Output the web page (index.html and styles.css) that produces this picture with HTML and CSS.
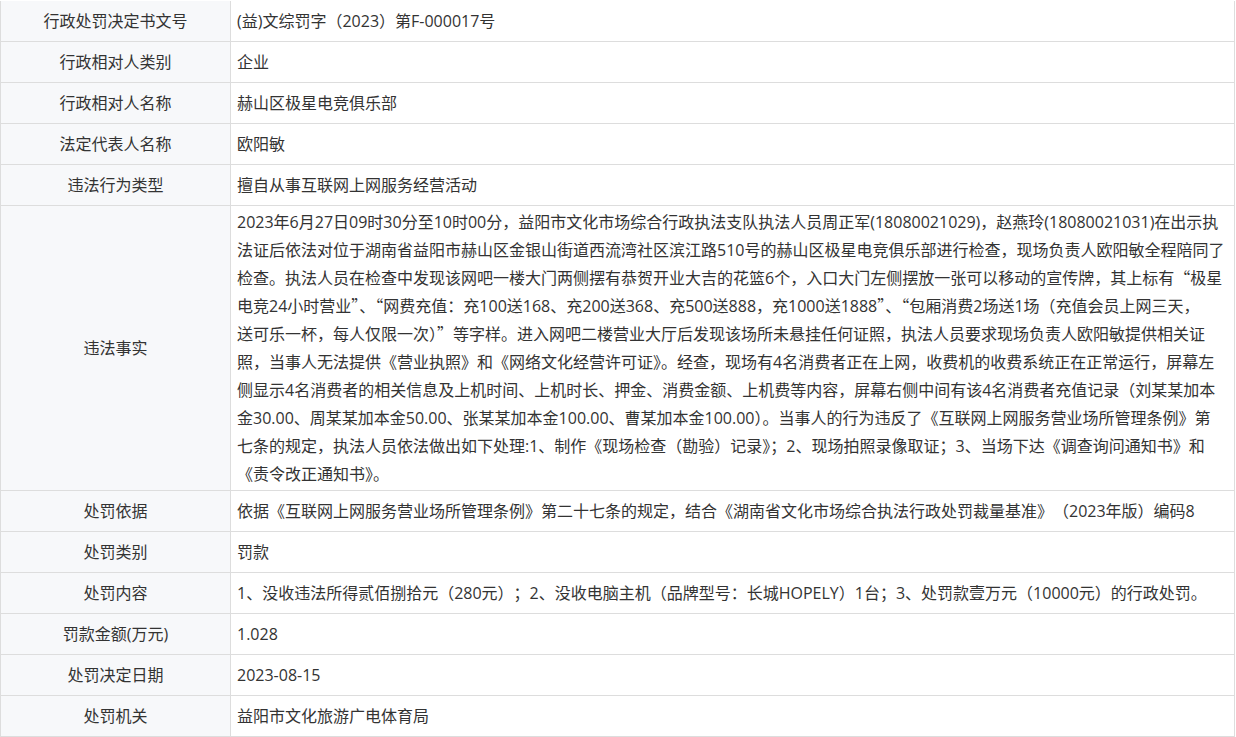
FILE: index.html
```html
<!DOCTYPE html>
<html lang="zh-CN">
<head>
<meta charset="utf-8">
<title>行政处罚信息</title>
<link rel="stylesheet" href="styles.css">
</head>
<body>
<div class="sheet">
  <div class="label">行政处罚决定书文号</div>
  <div class="value">(益)文综罚字（2023）第F-000017号</div>

  <div class="label">行政相对人类别</div>
  <div class="value">企业</div>

  <div class="label">行政相对人名称</div>
  <div class="value">赫山区极星电竞俱乐部</div>

  <div class="label">法定代表人名称</div>
  <div class="value">欧阳敏</div>

  <div class="label">违法行为类型</div>
  <div class="value">擅自从事互联网上网服务经营活动</div>

  <div class="label">违法事实</div>
  <div class="value value-long"><p class="para">2023年6月27日09时30分至10时00分，益阳市文化市场综合行政执法支队执法人员周正军(18080021029)，赵燕玲(18080021031)在出示执<br>法证后依法对位于湖南省益阳市赫山区金银山街道西流湾社区滨江路510号的赫山区极星电竞俱乐部进行检查，现场负责人欧阳敏全程陪同了<br>检查。执法人员在检查中发现该网吧一楼大门两侧摆有恭贺开业大吉的花篮6个，入口大门左侧摆放一张可以移动的宣传牌，其上标有<span class="q">“</span>极星<br>电竞24小时营业<span class="q">”</span>、<span class="q">“</span>网费充值：充100送168、充200送368、充500送888，充1000送1888<span class="q">”</span>、<span class="q">“</span>包厢消费2场送1场（充值会员上网三天，<br>送可乐一杯，每人仅限一次）<span class="q">”</span>等字样。进入网吧二楼营业大厅后发现该场所未悬挂任何证照，执法人员要求现场负责人欧阳敏提供相关证<br>照，当事人无法提供《营业执照》和《网络文化经营许可证》。经查，现场有4名消费者正在上网，收费机的收费系统正在正常运行，屏幕左<br>侧显示4名消费者的相关信息及上机时间、上机时长、押金、消费金额、上机费等内容，屏幕右侧中间有该4名消费者充值记录（刘某某加本<br>金30.00、周某某加本金50.00、张某某加本金100.00、曹某加本金100.00）。当事人的行为违反了《互联网上网服务营业场所管理条例》第<br>七条的规定，执法人员依法做出如下处理:1、制作《现场检查（勘验）记录》；2、现场拍照录像取证；3、当场下达《调查询问通知书》和<br>《责令改正通知书》。</p></div>

  <div class="label">处罚依据</div>
  <div class="value">依据《互联网上网服务营业场所管理条例》第二十七条的规定，结合《湖南省文化市场综合执法行政处罚裁量基准》（2023年版）编码8</div>

  <div class="label">处罚类别</div>
  <div class="value">罚款</div>

  <div class="label">处罚内容</div>
  <div class="value">1、没收违法所得贰佰捌拾元（280元）；2、没收电脑主机（品牌型号：长城HOPELY）1台；3、处罚款壹万元（10000元）的行政处罚。</div>

  <div class="label">罚款金额(万元)</div>
  <div class="value">1.028</div>

  <div class="label">处罚决定日期</div>
  <div class="value">2023-08-15</div>

  <div class="label">处罚机关</div>
  <div class="value">益阳市文化旅游广电体育局</div>
</div>
</body>
</html>
```

FILE: styles.css
```css
html, body {
  margin: 0;
  padding: 0;
  background: #ffffff;
}

body {
  padding-top: 1px;
  font-family: "Open Sans", "Noto Sans CJK SC", sans-serif;
  font-size: 16px;
  color: #333333;
  text-spacing-trim: space-all;
}

.sheet {
  width: 1235px;
  box-sizing: border-box;
  display: grid;
  grid-template-columns: 229px 1fr;
  gap: 1px;
  background: #dddddd;
  border-left: 1px solid #dddddd;
  border-right: 1px solid #dddddd;
  border-bottom: 1px solid #dddddd;
}

.label,
.value {
  min-height: 40px;
  box-sizing: border-box;
  padding: 2px 6px;
  line-height: 28px;
  display: flex;
  align-items: center;
}

.label {
  background: #f7f8fa;
  justify-content: center;
  text-align: center;
}

.value {
  background: #ffffff;
}

.value-long {
  padding-right: 0;
}

.para {
  margin: 0;
  text-spacing-trim: normal;
}

.q {
  font-family: "Noto Sans CJK SC", sans-serif;
  line-height: 1;
}
```
